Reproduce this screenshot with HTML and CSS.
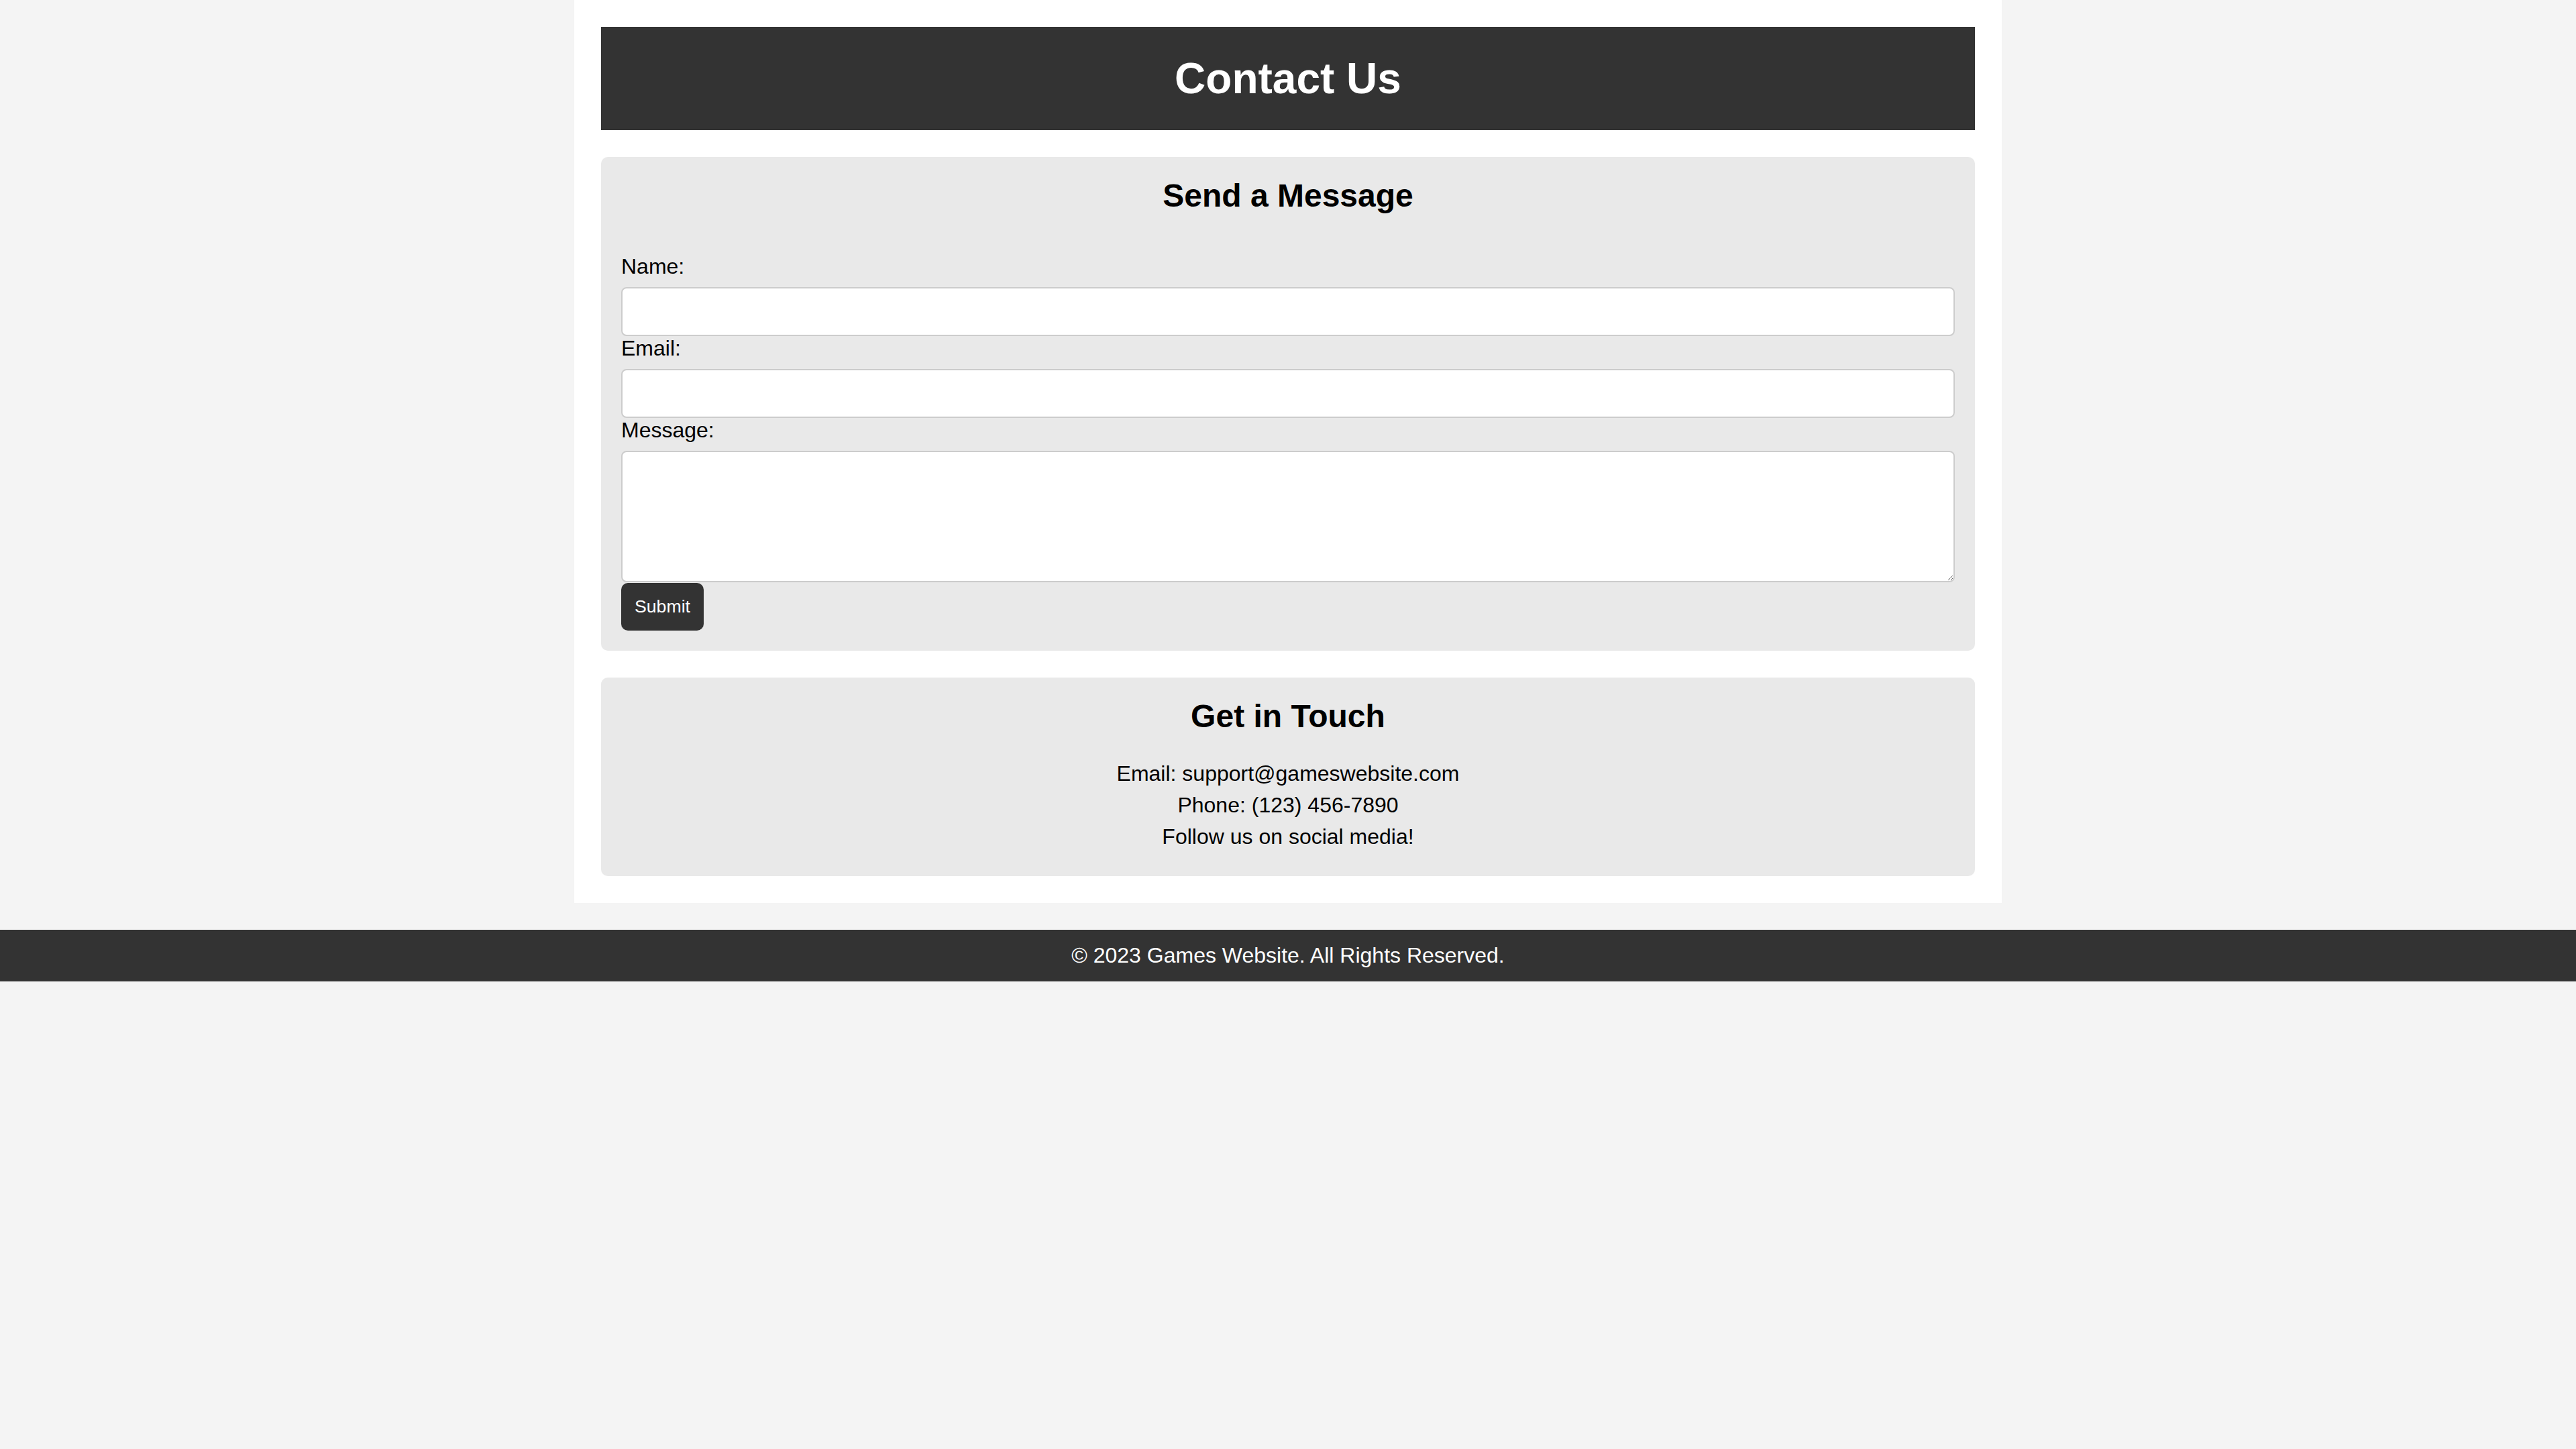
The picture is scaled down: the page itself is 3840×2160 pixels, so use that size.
FILE: index.html
```html
<!DOCTYPE html>
<html lang="en">
<head>
<meta charset="utf-8">
<title>Contact Us</title>
<link rel="stylesheet" href="styles.css">
</head>
<body>
<div class="container">
  <header class="page-header">
    <h1>Contact Us</h1>
  </header>
  <section class="card form-card">
    <h2>Send a Message</h2>
    <form class="contact-form">
      <label for="name">Name:</label>
      <input type="text" id="name" name="name">
      <label for="email">Email:</label>
      <input type="email" id="email" name="email">
      <label for="message">Message:</label>
      <textarea id="message" name="message"></textarea>
      <button type="submit">Submit</button>
    </form>
  </section>
  <section class="card info-card">
    <h2>Get in Touch</h2>
    <p>Email: support@gameswebsite.com</p>
    <p>Phone: (123) 456-7890</p>
    <p>Follow us on social media!</p>
  </section>
</div>
<footer class="page-footer">
  <p>&copy; 2023 Games Website. All Rights Reserved.</p>
</footer>
</body>
</html>
```
FILE: styles.css
```css
html, body {
  margin: 0;
  padding: 0;
  background: #f4f4f4;
  font-family: "Liberation Sans", Arial, Helvetica, sans-serif;
  font-size: 32px;
  line-height: normal;
  color: #000;
}

.container {
  width: 2128px;
  box-sizing: border-box;
  margin: 0 auto 40px;
  padding: 40px;
  background: #fff;
  display: flex;
  flex-direction: column;
  gap: 40px;
}

.page-header {
  background: #333;
  color: #fff;
  padding: 40px;
  text-align: center;
}

.page-header h1 {
  margin: 0;
  font-size: 64px;
  font-weight: bold;
}

.card {
  background: #e9e9e9;
  border-radius: 10px;
  padding: 30px;
}

.card h2 {
  margin: 0 0 40px;
  font-size: 48px;
  font-weight: bold;
  text-align: center;
}

.contact-form {
  padding-top: 20px;
}

.contact-form label {
  display: block;
  margin-bottom: 12px;
}

.contact-form input,
.contact-form textarea {
  display: block;
  width: 100%;
  box-sizing: border-box;
  margin: 0;
  padding: 16px;
  border: 2px solid #ccc;
  border-radius: 8px;
  background: #fff;
  font-family: inherit;
  font-size: 32px;
  line-height: normal;
}

.contact-form textarea {
  height: 196px;
}

.contact-form button {
  display: block;
  margin: 1px 0 0;
  padding: 20px;
  border: 0;
  border-radius: 10px;
  background: #333;
  color: #fff;
  font-family: "Liberation Sans", Arial, sans-serif;
  font-size: 26.67px;
  line-height: normal;
}

.info-card p {
  margin: 10px 0;
  text-align: center;
}

.page-footer {
  background: #333;
  color: #fff;
  text-align: center;
  padding: 20px;
}

.page-footer p {
  margin: 0;
}
```
